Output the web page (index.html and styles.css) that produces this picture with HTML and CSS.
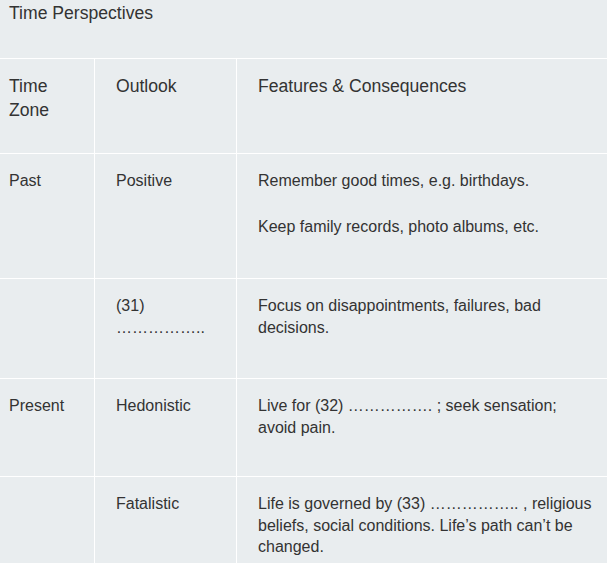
FILE: index.html
```html
<!DOCTYPE html>
<html lang="en">
<head>
<meta charset="utf-8">
<title>Time Perspectives</title>
<link rel="stylesheet" href="styles.css">
</head>
<body>
<div class="page">
  <div class="title">Time Perspectives</div>
  <table class="tp">
    <colgroup>
      <col class="c1"><col class="c2"><col class="c3">
    </colgroup>
    <tr class="r1 head">
      <td>Time Zone</td>
      <td>Outlook</td>
      <td>Features &amp; Consequences</td>
    </tr>
    <tr class="r2">
      <td>Past</td>
      <td>Positive</td>
      <td><p>Remember good times, e.g. birthdays.</p><p>Keep family records, photo albums, etc.</p></td>
    </tr>
    <tr class="r3">
      <td></td>
      <td>(31) ……………..</td>
      <td>Focus on disappointments, failures, bad decisions.</td>
    </tr>
    <tr class="r4">
      <td>Present</td>
      <td>Hedonistic</td>
      <td>Live for (32) ……………. ; seek sensation; avoid pain.</td>
    </tr>
    <tr class="r5">
      <td></td>
      <td>Fatalistic</td>
      <td>Life is governed by (33) …………….. , religious beliefs, social conditions. Life’s path can’t be changed.</td>
    </tr>
  </table>
</div>
</body>
</html>
```
FILE: styles.css
```css
html, body {
  margin: 0;
  padding: 0;
  background: #e9edef;
}
.page {
  width: 607px;
  height: 563px;
  overflow: hidden;
  font-family: "Liberation Sans", Arial, sans-serif;
  font-size: 16px;
  line-height: 21.6px;
  color: #333;
}
.title {
  padding: 1px 0 0 9px;
  height: 58px;
  box-sizing: border-box;
  font-size: 17.6px;
  line-height: 24px;
}
.tp {
  border-collapse: separate;
  border-spacing: 0;
  table-layout: fixed;
  width: 619px;
}
.c1 { width: 94px; }
.c2 { width: 142px; }
.c3 { width: 383px; }
.tp td {
  vertical-align: top;
  border-top: 1px solid #fff;
  padding: 16px 21px 0 21px;
}
.tp td + td {
  border-left: 1px solid #fff;
}
.tp td:first-child {
  padding-left: 9px;
  padding-right: 12px;
}
.tp .head td {
  font-size: 17.6px;
  line-height: 24px;
  padding-top: 15px;
}
.tp p {
  margin: 0 0 24px 0;
}
.r1 { height: 95px; }
.r2 { height: 125px; }
.r3 { height: 100px; }
.r4 { height: 98px; }
.r5 { height: 120px; }
```
